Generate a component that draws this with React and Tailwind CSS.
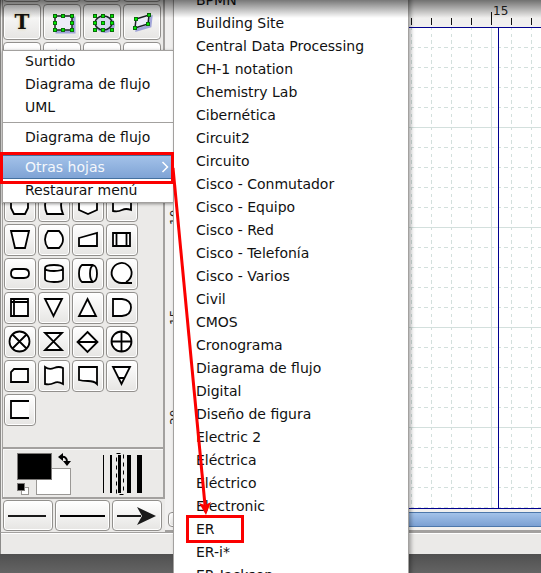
import React from "react";

const FONT = "font-['DejaVu_Sans','Noto_Sans',sans-serif]";

const sheets = [
  "BPMN", "Building Site", "Central Data Processing", "CH-1 notation", "Chemistry Lab",
  "Cibernética", "Circuit2", "Circuito", "Cisco - Conmutador", "Cisco - Equipo",
  "Cisco - Red", "Cisco - Telefonía", "Cisco - Varios", "Civil", "CMOS", "Cronograma",
  "Diagrama de flujo", "Digital", "Diseño de figura", "Electric 2", "Eléctrica",
  "Eléctrico", "Electronic", "ER", "ER-i*", "ER-Jackson",
];

const shapes = [
  ["Pantalla", "M10 7H21L24 11V18L21 24H10L7 18V11Z"],
  ["Almacenamiento", "M9 7H25Q21 15 25 24H9Q5 15 9 7Z"],
  ["Conector de página", "M7 7H25V20L16 24L7 20Z"],
  ["Documento", "M7 8H25V20Q20 18 16 20T7 21Z"],
  ["Operación manual", "M7 7H25L21 24H11Z"],
  ["Preparación", "M10 7H21Q25 11 25 15.500T21 24H10Q7 20 7 15.500T10 7Z"],
  ["Entrada manual", "M7 14L25 9V22H7Z"],
  ["Proceso predefinido", "M7 9H24V22H7ZM10.500 9V22M20.500 9V22"],
  ["Terminal", "M11 11H20Q25 11 25 15.500T20 20H11Q7 20 7 15.500T11 11Z"],
  ["Disco magnético", "M7 10Q7 7 16 7T25 10V21Q25 24 16 24T7 21ZM7 10Q7 13 16 13T25 10"],
  ["Tambor magnético", "M10 7H21Q25 8 25 15.500T21 24H10Q7 22 7 15.500T10 7ZM21 7Q18 9 18 15.500T21 24"],
  ["Cinta magnética", "M16 25A10 10 0 1 1 20 24M16 25H26"],
  ["Almacenamiento interno", "M7 7H24V24H7ZM10 7V24M7 10H24"],
  ["Combinar", "M7 7H24L15.500 24Z"],
  ["Extraer", "M15.500 7L24 24H7Z"],
  ["Retardo", "M7 7H16Q25 8 25 15.500T16 24H7Z"],
  ["Unión", "M5.500 15.500A10 10 0 1 0 25.500 15.500A10 10 0 1 0 5.500 15.500M8.500 8.500L22.500 22.500M22.500 8.500L8.500 22.500"],
  ["Cotejar", "M7 7H24L7 24H24Z"],
  ["Ordenar", "M15.500 6L25.500 16L15.500 26L5.500 16ZM5.500 16H25.500"],
  ["O", "M5.500 15.500A10 10 0 1 0 25.500 15.500A10 10 0 1 0 5.500 15.500M15.500 5.500V25.500M5.500 15.500H25.500"],
  ["Tarjeta", "M10 9H24V22H7V12Z"],
  ["Cinta perforada", "M7 7Q11 10 16 8T25 8V24Q20 21 16 23T7 24Z"],
  ["Cinta de transmisión", "M7 7H25V24Q22 21 16 21T7 20Z"],
  ["Almacenamiento fuera de línea", "M7 7H24L15.500 24ZM12 18H19"],
  ["Anotación", "M25 7H7V24H25"],
];

const BTN = "rounded border border-[#92908d] bg-linear-to-b from-white to-[#e6e5e3] shadow-[inset_0_0_0_1px_#ffffff]";

function Handles({ points }) {
  return points.map(([x, y]) => (
    <rect key={`${x}-${y}`} x={x - 1.5} y={y - 1.5} width="3" height="3" fill="#00ee00" stroke="#087008" strokeWidth="1" />
  ));
}

const boxPoints = [[12, 12], [20, 12], [29, 12], [12, 19], [29, 19], [12, 26], [20, 26], [29, 26]];
const polyPoints = [[13, 15], [26, 11], [25, 20], [12, 24]];

function Tool({ label, children }) {
  return (
    <button aria-label={label} className={`${BTN} flex h-9 w-[38px] items-center justify-center`}>
      {children}
    </button>
  );
}

function ToolSvg({ children }) {
  return (
    <svg viewBox="1 1 36 34" className="h-[34px] w-9 shrink-0" fill="none">{children}</svg>
  );
}

function Toolbox() {
  return (
    <aside className="flex w-[165px] shrink-0 flex-col overflow-hidden border-l border-[#8c8b89] pl-px">
      <div className="flex min-h-0 flex-1 flex-col overflow-hidden border-r-2 border-l border-r-[#a3a19f] border-l-[#a3a19f]">
        <div className="-mt-[34px] grid grid-cols-[repeat(4,38px)] gap-x-[2px] gap-y-[2px]">
          <Tool label="Modificar" />
          <Tool label="Editar texto" />
          <Tool label="Ampliar" />
          <Tool label="Desplazar" />
          <Tool label="Texto">
            <span className="font-['DejaVu_Serif',serif] text-xl leading-6 font-bold text-[#14120c] [text-shadow:0_0_3px_#d9cf9a]">T</span>
          </Tool>
          <Tool label="Caja">
            <ToolSvg>
              <rect x="14" y="14" width="17" height="14" stroke="#7f84cf" strokeWidth="3" opacity=".7" />
              <rect x="12" y="12" width="17" height="14" fill="#ececf8" stroke="#1c2226" strokeWidth="1.500" />
              <Handles points={boxPoints} />
            </ToolSvg>
          </Tool>
          <Tool label="Elipse">
            <ToolSvg>
              <ellipse cx="22" cy="20.500" rx="8.500" ry="7" stroke="#7f84cf" strokeWidth="3" opacity=".7" />
              <ellipse cx="20.500" cy="19" rx="8.500" ry="7" fill="#d6d8ee" stroke="#1c2226" strokeWidth="1.500" />
              <Handles points={[...boxPoints, [20, 19]]} />
            </ToolSvg>
          </Tool>
          <Tool label="Polígono">
            <ToolSvg>
              <path d="M15 17L28 13L27 22L14 26Z" stroke="#7f84cf" strokeWidth="3" opacity=".7" />
              <path d="M13 15L26 11L25 20L12 24Z" fill="#ececf8" stroke="#1c2226" strokeWidth="1.500" />
              <Handles points={polyPoints} />
            </ToolSvg>
          </Tool>
          <Tool label="Curva" />
          <Tool label="Línea"><ToolSvg><path d="M13 8L26 26" stroke="#3f4488" strokeWidth="2" /></ToolSvg></Tool>
          <Tool label="Arco" />
          <Tool label="Zigzag"><ToolSvg><path d="M14 8V18H25V28" stroke="#3f4488" strokeWidth="2" /></ToolSvg></Tool>
        </div>
        <div className="mt-28 ml-px grid grid-cols-[repeat(4,32px)] gap-[2px]">
          {shapes.map(([name, d]) => (
            <button key={name} aria-label={name} className={`${BTN} h-8 w-8`}>
              <svg viewBox="1 1 30 30" className="h-[30px] w-[30px]" fill="none" stroke="#000" strokeWidth="1.800">
                <path d={d} fill="#fff" />
              </svg>
            </button>
          ))}
        </div>
      </div>
      <div className="flex h-[52px] shrink-0 items-center justify-between border-2 border-l border-[#a3a19f] pr-5 pl-3 shadow-[inset_1px_1px_0_#f8f8f8]">
        <svg viewBox="14 451 58 45" className="h-[45px] w-[58px]" role="img" aria-label="Colores">
          <rect x="35.500" y="468.500" width="34" height="26" fill="#fff" stroke="#9a9895" />
          <rect x="16.500" y="453.500" width="34" height="26" fill="#000" stroke="#7c7a78" />
          <rect x="20.500" y="487.500" width="7" height="7" fill="#fff" stroke="#9a9895" />
          <rect x="16.500" y="483.500" width="7" height="7" fill="#000" stroke="#7c7a78" />
          <path d="M60 457Q66 456 66 462" fill="none" stroke="#000" strokeWidth="2" />
          <path d="M57 457L62 453V461ZM66 466L62 461H70Z" fill="#000" />
        </svg>
        <svg viewBox="102 451 41 45" className="h-[45px] w-[41px]" role="img" aria-label="Grosor de línea">
          <path d="M103 455h1v38h-1zM110 455h2v38h-2zM118 455h3v38h-3zM127 455h4v38h-4zM137 455h5v38h-5z" fill="#000" />
          <path d="M116.500 453.500H123.500V494.500H116.500Z" fill="none" stroke="#000" strokeDasharray="4 4" />
        </svg>
      </div>
      <div className="flex h-[33px] shrink-0 gap-[2px] pt-px pl-px">
        <button aria-label="Inicio de línea" className={`${BTN} h-[31px] w-[50px]`}>
          <svg viewBox="0 0 48 29" className="h-[29px] w-12"><path d="M4 14h38v2H4z" fill="#1a1a1a" /></svg>
        </button>
        <button aria-label="Estilo de línea" className={`${BTN} h-[31px] w-[55px]`}>
          <svg viewBox="0 0 53 29" className="h-[29px] w-[53px]"><path d="M4 14h45v2H4z" fill="#000" /></svg>
        </button>
        <button aria-label="Fin de línea" className={`${BTN} h-[31px] w-[50px]`}>
          <svg viewBox="0 0 48 29" className="h-[29px] w-12">
            <path d="M4 14h24v2H4z" fill="#1a1a1a" />
            <path d="M24 6L43 15L24 24L29 15Z" fill="#1a1a1a" />
          </svg>
        </button>
      </div>
    </aside>
  );
}

function TopRuler() {
  return (
    <svg className="block h-[27px] w-full" fill="none" aria-hidden="true">
      <defs>
        <pattern id="ticks" width="20" height="27" patternUnits="userSpaceOnUse">
          <rect y="18" width="1" height="7" fill="#111" />
        </pattern>
        <pattern id="longTicks" width="100" height="27" patternUnits="userSpaceOnUse">
          <rect y="12" width="1" height="13" fill="#111" />
        </pattern>
      </defs>
      <rect width="100%" height="27" fill="url(#ticks)" />
      <rect width="100%" height="27" fill="url(#longTicks)" />
      <text x="302" y="15" fill="#222" className={`${FONT} text-xs`}>15</text>
    </svg>
  );
}

function Canvas() {
  return (
    <svg className="block min-h-0 w-full flex-1 bg-white" fill="none" role="img" aria-label="Lienzo">
      <defs>
        <pattern id="minor" width="20" height="20" patternUnits="userSpaceOnUse">
          <path d="M0 .5H20" stroke="#d3e0dd" strokeDasharray="3 4 3 3 4 3" />
          <path d="M.5 0V20" stroke="#d3e0dd" strokeDasharray="3 4 3 3 4 3" />
        </pattern>
        <pattern id="major" width="100" height="100" patternUnits="userSpaceOnUse">
          <path d="M0 .5H100M.5 0V100" stroke="#d3e0dd" />
        </pattern>
      </defs>
      <rect width="100%" height="100%" fill="url(#minor)" />
      <rect width="100%" height="100%" fill="url(#major)" />
      <rect width="100%" height="1" fill="#00008f" />
      <rect x="307" width="1" height="100%" fill="#00008f" />
    </svg>
  );
}

function Workspace() {
  return (
    <main className="flex min-w-0 flex-1 flex-col border-b border-[#a3a19f] bg-[#f1f0ef]">
      <div className="flex min-h-0 flex-1">
        <svg className="h-full w-[26px] shrink-0" aria-hidden="true">
          <g fill="#222" className={`${FONT} text-xs`}>
            <text transform="translate(14 225) rotate(-90)">10</text>
            <text transform="translate(14 325) rotate(-90)">15</text>
            <text transform="translate(14 425) rotate(-90)">20</text>
          </g>
        </svg>
        <div className="flex min-w-0 flex-1 flex-col">
          <TopRuler />
          <Canvas />
          <div className="h-px bg-[#00008f]" />
        </div>
      </div>
      <div className="mt-[3px] flex h-[15px] gap-px pl-[3px]">
        <button aria-label="Desplazar a la izquierda" className={`${BTN} w-5`} />
        <div className="flex-1 border-y border-[#4d77ab] bg-linear-to-b from-[#a3c2e9] to-[#7ba0d3]" />
      </div>
      <div className="mt-[3px] h-px bg-[#a3a19f]" />
    </main>
  );
}

const ITEM = "block w-full text-left text-sm leading-[23px] whitespace-nowrap pl-[22px] text-[#111]";

export default function App() {
  return (
    <div className={`relative flex h-screen flex-col overflow-hidden bg-[#ebeae8] ${FONT}`}>
      <div className="flex min-h-0 flex-1">
        <Toolbox />
        <Workspace />
      </div>
      <footer className="h-[22px] shrink-0 border-t border-l border-[#a3a19f] border-l-[#8c8b89] shadow-[inset_0_1px_0_#ffffff]" />
      <div className="h-[19px] shrink-0 bg-linear-to-b from-[#505050] to-[#646464]" />

      <nav aria-label="Hojas" className="absolute top-[50px] left-[2px] w-[172px] border border-[#a3a19f] bg-white shadow-[0_1px_3px_#00000066]">
        <div className="-mt-px">
          <button className={ITEM}>Surtido</button>
          <button className={ITEM}>Diagrama de flujo</button>
          <button className={ITEM}>UML</button>
        </div>
        <hr className="my-[3px] border-[#a3a19f]" />
        <button className={ITEM}>Diagrama de flujo</button>
        <button className="mt-[6px] flex h-6 w-full items-center justify-between border-y border-[#44709f] bg-linear-to-b from-[#a3c2e9] to-[#7fa3d5] pr-1 pl-[22px] text-sm text-[#f4f7fb]">
          Otras hojas
          <svg viewBox="0 0 8 12" className="h-3 w-2" fill="none" stroke="#fff" strokeWidth="1.500"><path d="M1.500 1L6.500 6L1.500 11" /></svg>
        </button>
        <button className={ITEM}>Restaurar menú</button>
      </nav>

      <nav aria-label="Otras hojas" className="absolute -top-3 left-[173px] w-9/20 max-w-[236px] border border-[#a3a19f] bg-white shadow-[2px_0_4px_#00000055]">
        {sheets.map((s) => (
          <button key={s} className={ITEM}>{s}</button>
        ))}
      </nav>

      <div className="pointer-events-none absolute inset-x-0 top-0 h-[18px] bg-linear-to-b from-[#00000088] to-transparent" />

      <svg viewBox="0 0 260 560" className="pointer-events-none absolute top-0 left-0 h-[560px] w-[260px]" fill="none" stroke="#fb0000" strokeWidth="3" aria-hidden="true">
        <rect x="1.500" y="153.500" width="171" height="29" />
        <rect x="187.500" y="516.500" width="55" height="25" />
        <path d="M173 168L205 505" />
        <path d="M199 503L205 505L211 502L206 515Z" fill="#fb0000" stroke="none" />
      </svg>
    </div>
  );
}
